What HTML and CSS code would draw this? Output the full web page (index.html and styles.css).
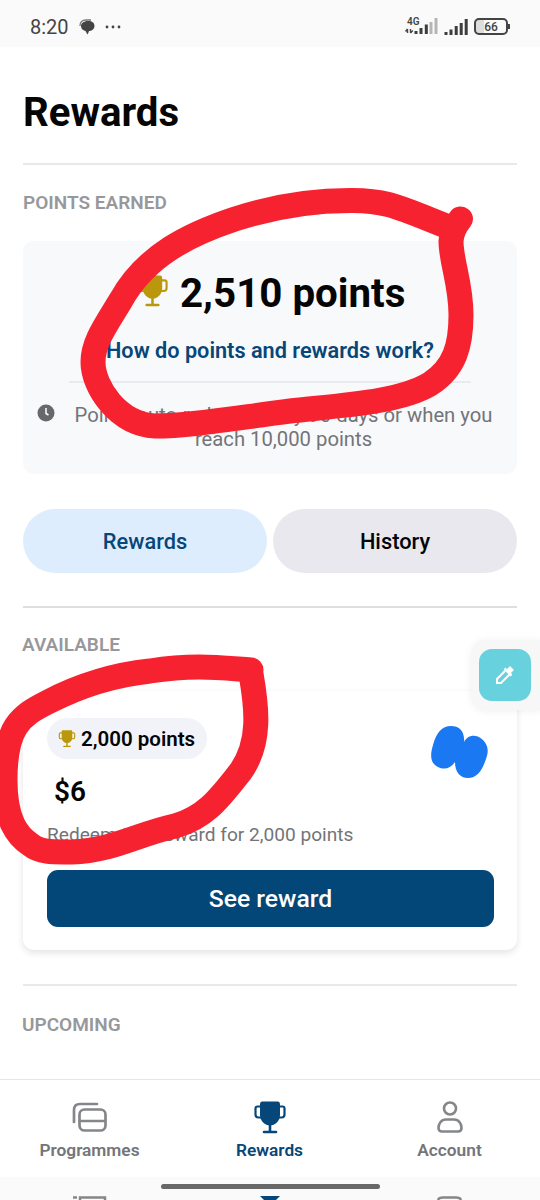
FILE: index.html
```
<!DOCTYPE html>
<html lang="en">
<head>
<meta charset="utf-8">
<title>Rewards</title>
<link rel="stylesheet" href="styles.css">
</head>
<body>
<svg class="defs" width="0" height="0">
  <symbol id="trophy" viewBox="0 0 34 34">
    <path d="M9 .5H25Q27 .5 27 3V14C27 20 22 24.500 17 24.500S7 20 7 14V3Q7 .5 9 .5Z" fill="currentColor"/>
    <path d="M8 5.500H4.500Q2.500 5.500 2.500 7.500V13.500Q2.500 16.500 5.500 16.500H8M26 5.500H29.500Q31.500 5.500 31.500 7.500V13.500Q31.500 16.500 28.500 16.500H26" fill="none" stroke="currentColor" stroke-width="2.200"/>
    <path d="M17 23V31M11 31H23" fill="none" stroke="currentColor" stroke-width="2.600" stroke-linecap="round"/>
  </symbol>
</svg>
<div class="phone">
  <header class="status">
    <span class="time">8:20</span>
    <svg class="chat" width="16" height="16" viewBox="0 0 16 16"><path d="M1 7Q1 1 7 1H12" fill="none" stroke="#777" stroke-width="1.300"/><path d="M9 2C13.500 2 15.500 4 15.500 7S12.500 12 10 12Q9.500 14 8.300 15.500Q7.500 13.500 6.500 12C3.500 11.500 2 9.500 2 7S4.500 2 9 2Z" fill="#444"/></svg>
    <svg class="dots" width="16" height="4" viewBox="0 0 16 4" fill="#444"><circle cx="2" cy="2" r="1.400"/><circle cx="8" cy="2" r="1.400"/><circle cx="14" cy="2" r="1.400"/></svg>
    <div class="network">
      <span class="gen">4G</span>
      <svg width="33" height="16" viewBox="0 0 33 16" stroke-width="3"><path d="M2.500 11V15M.500 13.500L2.500 11M5.500 15V11M7.800 12.500L5.500 15" stroke="#444" stroke-width="1.400" fill="none"/><path d="M11 16V13M16 16V10M21.300 16V6.500" stroke="#3d3d3d"/><path d="M26 16V4M31 16V0" stroke="#b5b5b5"/></svg>
    </div>
    <svg class="signal" width="24" height="16" viewBox="0 0 24 16"><path d="M2 16V13M7 16V10.500M12.200 16V7M17.200 16V4M22.200 16V0" stroke="#3d3d3d" stroke-width="3"/></svg>
    <div class="battery"><span>66</span></div>
  </header>

  <main class="content">
    <h1><span>Rewards</span></h1>
    <h2 class="label earned">POINTS EARNED</h2>
    <section class="summary">
      <div class="total"><svg width="33" height="33"><use href="#trophy"/></svg><span>2,510 points</span></div>
      <a class="help">How do points and rewards work?</a>
      <div class="rule"></div>
      <div class="notice">
        <svg width="18" height="18" viewBox="0 0 18 18"><circle cx="9" cy="9" r="8.500" fill="#67686c"/><path d="M9 4V9.500L11.500 11" fill="none" stroke="#fff" stroke-width="1.500"/></svg>
        <p>Points auto-redeem every 90 days or when you<br>reach 10,000 points</p>
      </div>
    </section>
    <div class="tabs"><div class="tab active">Rewards</div><div class="tab">History</div></div>
    <h2 class="label available">AVAILABLE</h2>
    <section class="reward">
      <div class="reward-head">
        <div class="pill"><svg width="18" height="18"><use href="#trophy"/></svg><span>2,000 points</span></div>
        <svg class="brand" width="58" height="53" viewBox="0 0 58 53"><path d="M20 0C28 0 34 5 33 16C37 8 46 8 52 14C57 19 58 25 55 33C51 45 46 52 37 52C29 52 24 46 24 36C19 43 13 44 7 41C-1 37-1 29 2 19C5 7 11 0 20 0Z" fill="#1b78f3"/></svg>
      </div>
      <div class="amount">$6</div>
      <p class="redeem">Redeem this reward for 2,000 points</p>
      <div class="button">See reward</div>
    </section>
    <div class="upcoming-block"><h2 class="label">UPCOMING</h2></div>
  </main>

  <nav class="nav">
    <div class="nav-item"><svg width="36" height="34" viewBox="0 0 36 34" fill="none" stroke="#858689" stroke-width="2.700" stroke-linecap="round"><path d="M2 21V9Q2 3 8 3H25"/><rect x="7.500" y="8.500" width="26" height="21" rx="5"/><path d="M8 20H33"/></svg><span>Programmes</span></div>
    <div class="nav-item current"><svg width="34" height="34"><use href="#trophy"/></svg><span>Rewards</span></div>
    <div class="nav-item"><svg width="28" height="34" viewBox="0 0 28 34" fill="none" stroke="#858689" stroke-width="2.600"><circle cx="14" cy="7.500" r="6"/><path d="M10 18.500H18C23 18.500 25.500 23 25.500 27Q25.500 30.500 22 30.500H6Q2.500 30.500 2.500 27C2.500 23 5 18.500 10 18.500Z"/></svg><span>Account</span></div>
  </nav>
  <footer class="gesture">
    <div class="handle"></div>
    <svg width="540" height="4" viewBox="0 0 540 4"><path d="M73 1.500H77M80 4V1.500H105V4" fill="none" stroke="#858689" stroke-width="2.500"/><path d="M260 0H280L276 4H264Z" fill="#074678"/><path d="M438 4Q439 1.500 443 1.500H456Q460 1.500 461 4" fill="none" stroke="#858689" stroke-width="2.500"/></svg>
  </footer>

  <div class="picker-tray"><div class="picker"><svg width="20" height="20" viewBox="0 0 20 20" fill="none" stroke="#fff" stroke-width="2"><path d="M11 5L2 14V18H6L15 9"/><path d="M9.500 3.500L16.500 10.500" stroke-width="2.500"/><path d="M13 7L17 3" stroke-width="5.500"/></svg></div></div>
  <svg class="marker" width="540" height="1200" viewBox="0 0 540 1200">
    <path d="M460.500 219Q452 229 451 241C451 262 461 283 461 315C461 345 455 368 430 384C400 402 345 405 290 411C235 418 190 426 155 426C118 424 93 387 93 362C93 342 106 325 121 300C146 255 190 234 235 219C275 206 315 200.500 350 200.500C387 200 400 208 451 228"/>
    <path d="M251 670C222 668 195 664 150 671C112 675 75 688 48 702C20 716 5 727 5 780C5 820 17 836 31 845C41 853 55 852 72 852C112 851 138 834 175 826C207 817 222 795 241 771C261 742 257 708 251 674"/>
  </svg>
</div>
</body>
</html>
```
FILE: styles.css
```
* { box-sizing: border-box; }
body { margin: 0; font-family: Roboto, "Liberation Sans", sans-serif; color: #050505; background: #fff; }
h1, h2, p { margin: 0; }
svg { display: block; flex: none; }
.defs { position: absolute; }
.phone { position: relative; width: 540px; height: 1200px; overflow: hidden; display: flex; flex-direction: column; white-space: nowrap; }
.status { height: 47px; background: #fafafa; display: flex; align-items: center; padding: 6px 30px 0; flex: none; color: #444; }
.time { font-size: 20px; width: 49px; }
.dots { margin-left: 10px; }
.network { margin-left: 284px; width: 33px; height: 17px; display: grid; }
.network > * { grid-area: 1 / 1; }
.gen { font-size: 10px; line-height: 8px; font-weight: 600; margin-left: 2px; }
.signal { margin-left: 6px; margin-top: 1px; }
.battery { flex: none; position: relative; margin-left: 6px; width: 34px; height: 17px; border: 2px solid #444; border-radius: 5px; font-size: 12px; line-height: 14px; text-align: center; font-weight: 500; background: linear-gradient(90deg, #ddd 8px, transparent 8px); }
.battery::after { content: ""; position: absolute; right: -4px; top: 4px; width: 2px; height: 5px; background: #444; }
.content { height: 1032px; flex: none; padding: 0 23px; }
h1 { font-size: 40.200px; line-height: 48px; height: 118px; padding-top: 42px; border-bottom: 2px solid #e9e9e9; font-weight: 700; }
.label { color: #97989b; font-size: 19px; line-height: 24px; font-weight: 600; }
.earned { padding-top: 26px; height: 76px; }
.summary { height: 233px; background: #f8f9fb; border-radius: 11px; padding-top: 27px; }
.total { display: flex; align-items: center; height: 50px; padding-left: 113px; font-size: 40.300px; font-weight: 700; }
.total svg { margin-bottom: 4px; }
.total svg, .pill svg { color: #bb980b; }
.total span { margin-left: 11px; }
.help { display: block; color: #074678; font-size: 21.700px; line-height: 28px; font-weight: 600; margin-top: 19px; padding-left: 83px; }
.rule { width: 402px; height: 2px; margin: 16px 0 0 46px; background: #e9ebee; }
.notice { display: flex; padding: 20px 0 0 14px; font-size: 20.250px; line-height: 24px; color: #737478; }
.notice svg { margin-top: 1px; }
.notice p { width: 419px; margin-left: 19px; text-align: center; }
.tabs { display: flex; gap: 6px; margin-top: 35px; height: 99px; border-bottom: 2px solid #dfdfdf; }
.tab { flex: 1; height: 64px; border-radius: 32px; background: #e9e8ee; text-align: center; font-size: 21.800px; line-height: 66px; font-weight: 500; }
.tab.active { background: #deedfd; color: #074678; }
.available { padding-top: 25px; height: 83px; margin-left: -1px; }
.reward { height: 259px; border-radius: 11px; padding: 27px 23px 0 24px; box-shadow: 0 3px 7px #0000001c; }
.reward-head { display: flex; justify-content: space-between; height: 60px; }
.pill { display: flex; align-items: center; width: 160px; height: 41px; background: #f2f3f9; border-radius: 21px; padding-left: 11px; font-size: 20.500px; font-weight: 600; }
.pill span { margin-left: 5px; }
.brand { margin: 8px 5px 0; }
.amount { font-size: 28px; line-height: 28px; font-weight: 600; margin-left: 7px; }
.redeem { color: #737478; font-size: 19.100px; line-height: 24px; margin-top: 17px; }
.button { background: #034778; height: 57px; color: #fff; border-radius: 11px; text-align: center; font-size: 24.700px; line-height: 58px; font-weight: 500; margin-top: 23px; }
.upcoming-block { border-top: 2px solid #e9e9e9; margin-top: 34px; padding-top: 27px; }
.upcoming-block .label { margin-left: -1px; }
.nav { height: 98px; flex: none; border-top: 1px solid #e6e6e6; background: #fff; display: grid; grid-template-columns: repeat(3, 180px); padding-top: 21px; }
.nav-item { display: flex; flex-direction: column; align-items: center; font-size: 17.300px; line-height: 22px; font-weight: 600; color: #747578; gap: 4px; }
.nav-item span { margin-left: -1px; }
.current { color: #074678; }
.gesture { height: 23px; background: #fafafa; padding-top: 7px; flex: none; }
.handle { height: 5px; width: 219px; background: #686868; border-radius: 3px; margin: 0 auto 7px; }
.picker-tray { position: absolute; top: 640px; left: 471px; width: 80px; height: 70px; border-radius: 15px; background: #f7f7f7; padding: 9px 8px; box-shadow: 0 1px 8px #00000010; }
.picker { width: 52px; height: 52px; border-radius: 13px; background: #68d1de; display: grid; place-items: center; }
.marker { position: absolute; left: 0; top: 0; fill: none; stroke: #f7222f; stroke-width: 25; stroke-linecap: round; stroke-linejoin: round; pointer-events: none; }
```
